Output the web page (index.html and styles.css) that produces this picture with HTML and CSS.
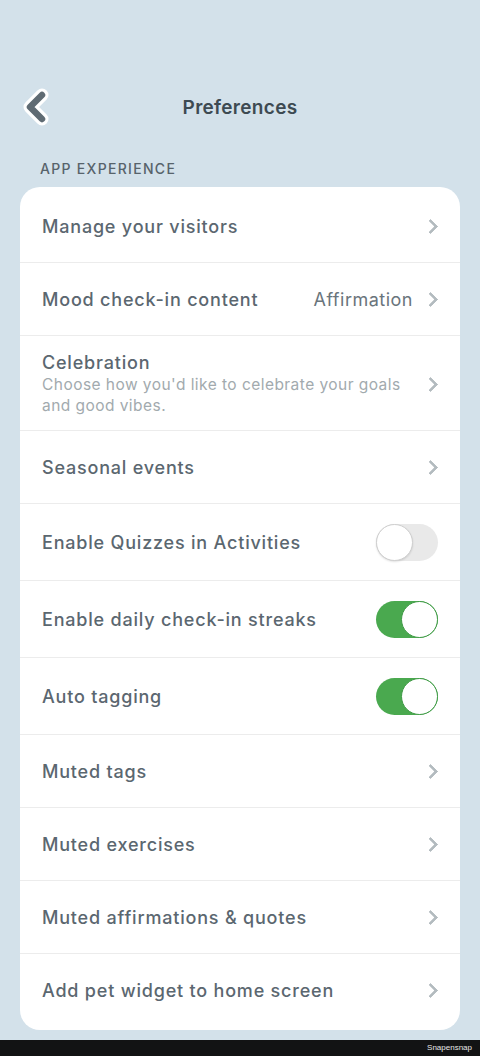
FILE: index.html
```html
<!DOCTYPE html>
<html lang="en">

<head>
    <meta charset="UTF-8">
    <title>Preferences</title>
    <link rel="stylesheet" href="styles.css">
</head>

<body>
    <div class="screen">
        <div class="topbar">
            <button class="back" aria-label="Back">
                <svg width="30" height="40" viewBox="0 0 30 40">
                    <path d="M22 8 L10 20 L22 32" fill="none" stroke="#fff" stroke-width="13" stroke-linecap="round" stroke-linejoin="round"/>
                    <path d="M22 8 L10 20 L22 32" fill="none" stroke="#5f6b73" stroke-width="6.5" stroke-linecap="round" stroke-linejoin="round"/>
                </svg>
            </button>
            <h1>Preferences</h1>
        </div>

        <div class="section-label">APP EXPERIENCE</div>

        <div class="card">
            <div class="row">
                <span class="title">Manage your visitors</span>
                <span class="chev"></span>
            </div>
            <div class="row">
                <span class="title">Mood check-in content</span>
                <span class="value">Affirmation</span>
                <span class="chev"></span>
            </div>
            <div class="row tall">
                <div class="text">
                    <span class="title">Celebration</span>
                    <span class="sub">Choose how you'd like to celebrate your goals and good vibes.</span>
                </div>
                <span class="chev"></span>
            </div>
            <div class="row">
                <span class="title">Seasonal events</span>
                <span class="chev"></span>
            </div>
            <div class="row switch-row">
                <span class="title">Enable Quizzes in Activities</span>
                <span class="switch"></span>
            </div>
            <div class="row switch-row">
                <span class="title">Enable daily check-in streaks</span>
                <span class="switch on"></span>
            </div>
            <div class="row switch-row">
                <span class="title">Auto tagging</span>
                <span class="switch on"></span>
            </div>
            <div class="row">
                <span class="title">Muted tags</span>
                <span class="chev"></span>
            </div>
            <div class="row">
                <span class="title">Muted exercises</span>
                <span class="chev"></span>
            </div>
            <div class="row">
                <span class="title">Muted affirmations &amp; quotes</span>
                <span class="chev"></span>
            </div>
            <div class="row last">
                <span class="title">Add pet widget to home screen</span>
                <span class="chev"></span>
            </div>
        </div>
    </div>

    <div class="footer">Snapensnap</div>
</body>

</html>
```

FILE: styles.css
```css
body {
    margin: 0;
    background: #d3e1ea;
    font-family: Inter, "Noto Sans", Arial, sans-serif;
    color: #5b6770;
    height: 1056px;
    display: flex;
    flex-direction: column;
}

.screen {
    flex: 1;
    padding: 0 20px;
}

.topbar {
    position: relative;
    height: 62px;
    margin-top: 77px;
    display: flex;
    align-items: center;
    justify-content: center;
}

.topbar h1 {
    margin: 0;
    font-size: 19px;
    font-weight: 600;
    letter-spacing: 0.3px;
    color: #3d4a52;
    margin-top: -2px;
}

.back {
    position: absolute;
    left: 0;
    top: 10px;
    padding: 0;
    border: none;
    background: none;
    width: 30px;
    height: 40px;
}

.section-label {
    font-size: 14px;
    font-weight: 500;
    letter-spacing: 1.3px;
    color: #57636b;
    padding-left: 20px;
    margin-top: 21px;
    line-height: 18px;
}

.card {
    margin-top: 9px;
    background: #fff;
    border-radius: 20px;
    padding: 3px 0 3px;
}

.row {
    display: flex;
    align-items: center;
    height: 73px;
    padding: 0 22px;
    border-bottom: 1px solid #ececec;
    box-sizing: border-box;
}

.row.last {
    border-bottom: none;
}

.row.tall {
    height: 95px;
    padding-top: 2px;
}

.row.switch-row {
    height: 77px;
}

.title {
    font-size: 18px;
    font-weight: 500;
    letter-spacing: 0.8px;
    color: #5b6770;
    flex: 1;
}

.text {
    flex: 1;
    display: flex;
    flex-direction: column;
}

.sub {
    font-size: 15.5px;
    letter-spacing: 0.45px;
    color: #a2aaae;
    line-height: 21px;
    margin-top: 1px;
    padding-right: 20px;
}

.value {
    font-size: 18px;
    letter-spacing: 0.5px;
    color: #6a757c;
    margin-right: 12px;
}

.chev {
    width: 8px;
    height: 8px;
    border-right: 3px solid #b3bbbf;
    border-top: 3px solid #b3bbbf;
    transform: rotate(45deg);
    margin-right: 2px;
    border-radius: 1px;
}

.switch {
    position: relative;
    width: 62px;
    height: 37px;
    border-radius: 19px;
    background: #e9e9e9;
    box-sizing: border-box;
}

.switch::after {
    content: "";
    position: absolute;
    left: 0;
    top: 0;
    width: 37px;
    height: 37px;
    border-radius: 50%;
    background: #fff;
    border: 1.5px solid #cfcfcf;
    box-sizing: border-box;
    box-shadow: 0 1px 2px rgba(0, 0, 0, 0.12);
}

.switch.on {
    background: #4aa94f;
}

.switch.on::after {
    left: auto;
    right: 0;
    border-color: #3e9a44;
    box-shadow: none;
}

.footer {
    height: 16px;
    background: #121314;
    color: #e6e6e6;
    font-size: 8px;
    text-align: right;
    padding-right: 8px;
    line-height: 16px;
    font-family: "Liberation Sans", Arial, sans-serif;
}
```
